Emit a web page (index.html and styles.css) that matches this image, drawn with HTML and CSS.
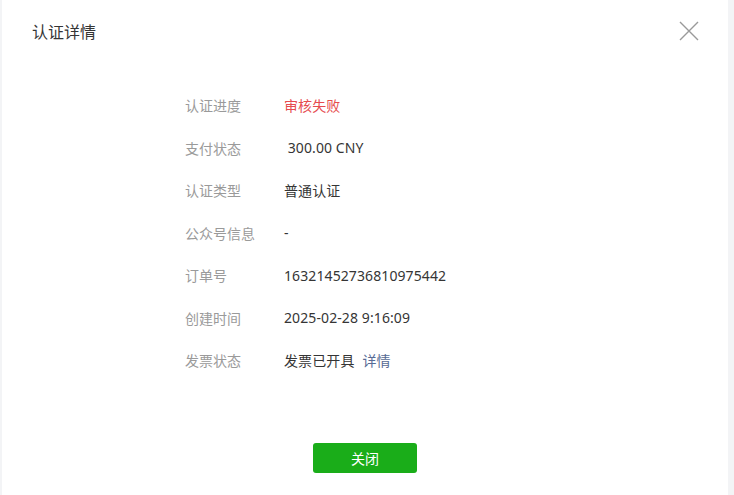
FILE: index.html
```html
<!DOCTYPE html>
<html lang="zh-CN">
<head>
<meta charset="utf-8">
<link rel="stylesheet" href="styles.css">
</head>
<body>
<div class="modal">
  <div class="header">
    <div class="title">认证详情</div>
    <button class="close" aria-label="关闭">
      <svg width="20" height="20" viewBox="0 0 20 20"><path d="M1 1 L19 19 M19 1 L1 19" stroke="#9a9a9a" stroke-width="1.4" fill="none"/></svg>
    </button>
  </div>
  <div class="body">
    <div class="row"><div class="label">认证进度</div><div class="value red">审核失败</div></div>
    <div class="row"><div class="label">支付状态</div><div class="value">&nbsp;300.00 CNY</div></div>
    <div class="row"><div class="label">认证类型</div><div class="value">普通认证</div></div>
    <div class="row"><div class="label">公众号信息</div><div class="value">-</div></div>
    <div class="row"><div class="label">订单号</div><div class="value">16321452736810975442</div></div>
    <div class="row"><div class="label">创建时间</div><div class="value">2025-02-28 9:16:09</div></div>
    <div class="row"><div class="label">发票状态</div><div class="value">发票已开具<a class="link">详情</a></div></div>
  </div>
  <div class="footer">
    <button class="btn">关闭</button>
  </div>
</div>
</body>
</html>
```
FILE: styles.css
```css
html, body {
  margin: 0;
  padding: 0;
  height: 100%;
}
body {
  background: #f3f4f6;
  font-family: "Noto Sans", "Noto Sans CJK SC", sans-serif;
  overflow: hidden;
}
.modal {
  background: #fff;
  margin: 0 6px 0 2px;
  height: 495px;
  box-sizing: border-box;
}
.header {
  height: 62px;
  display: flex;
  align-items: center;
  justify-content: space-between;
  padding: 0 29px 0 30px;
}
.title {
  font-size: 16px;
  color: #353535;
}
.close {
  border: 0;
  background: none;
  padding: 0;
  width: 20px;
  height: 20px;
  display: flex;
}
.body {
  padding: 22px 0 0 183px;
}
.row {
  display: flex;
  align-items: center;
  height: 42.5px;
  font-size: 14px;
}
.label {
  width: 99px;
  color: #9a9a9a;
}
.value {
  color: #353535;
  letter-spacing: 0.1px;
}
.red {
  color: #e64b4e;
}
.link {
  color: #576b95;
  margin-left: 8px;
}
.footer {
  display: flex;
  justify-content: center;
  padding-top: 61px;
}
.btn {
  width: 104px;
  height: 30px;
  border: 0;
  border-radius: 3px;
  background: #1aad19;
  color: #fff;
  font-family: "Noto Sans", "Noto Sans CJK SC", sans-serif;
  font-size: 14px;
  padding: 0;
}
```
